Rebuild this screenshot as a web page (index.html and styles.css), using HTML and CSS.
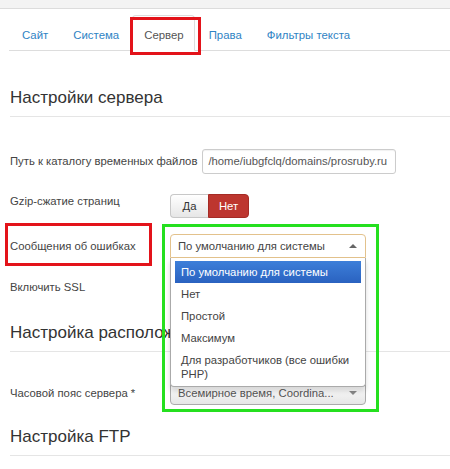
FILE: index.html
```html
<!DOCTYPE html>
<html lang="ru">
<head>
    <meta charset="UTF-8">
    <title>Настройки сервера</title>
    <link rel="stylesheet" href="styles.css">
</head>
<body>
    <div class="topbar"></div>
    <ul class="tabs">
        <li><a href="#">Сайт</a></li>
        <li><a href="#">Система</a></li>
        <li class="active"><a href="#">Сервер</a></li>
        <li><a href="#">Права</a></li>
        <li><a href="#">Фильтры текста</a></li>
    </ul>
    <div class="mark mark-tab"></div>

    <div class="page">
        <div class="legend legend-first">Настройки сервера</div>

        <div class="row row-path">
            <label class="lbl">Путь к каталогу временных файлов</label>
            <input class="text-input" type="text" value="/home/iubgfclq/domains/prosruby.ru">
        </div>

        <div class="row row-gzip">
            <label class="lbl lbl-top">Gzip-сжатие страниц</label>
            <div class="btn-group">
                <span class="btn">Да</span>
                <span class="btn btn-no">Нет</span>
            </div>
        </div>

        <div class="row row-errors">
            <label class="lbl">Сообщения об ошибках</label>
            <div class="chosen chosen-open">
                <span class="chosen-text">По умолчанию для системы</span>
                <span class="arrow-up"></span>
                <ul class="chosen-drop">
                    <li class="hl">По умолчанию для системы</li>
                    <li>Нет</li>
                    <li>Простой</li>
                    <li>Максимум</li>
                    <li>Для разработчиков (все ошибки PHP)</li>
                </ul>
            </div>
        </div>

        <div class="row row-ssl">
            <label class="lbl">Включить SSL</label>
        </div>

        <div class="legend legend-second">Настройка расположения</div>

        <div class="row row-tz">
            <label class="lbl">Часовой пояс сервера *</label>
            <div class="chosen chosen-tz">
                <span class="chosen-text">Всемирное время, Coordina...</span>
                <span class="arrow-down"></span>
            </div>
        </div>

        <div class="legend legend-third">Настройка FTP</div>
    </div>

    <div class="mark mark-label"></div>
    <div class="mark mark-green"></div>
</body>
</html>
```

FILE: styles.css
```css
body {
    margin: 0;
    background: #fff;
    font-family: "Liberation Sans", Arial, sans-serif;
    font-size: 11.3px;
    color: #444;
    position: relative;
    overflow: hidden;
}
.topbar {
    height: 8px;
    background: #f3f3f3;
    border-bottom: 1px solid #dcdcdc;
}
.tabs {
    list-style: none;
    margin: 6px 0 0 9px;
    padding: 0 0 0 1px;
    display: flex;
    border-bottom: 1px solid #ddd;
}
.tabs li {
    margin-right: 2px;
    margin-bottom: -1px;
}
.tabs a {
    display: block;
    padding: 10px 10px 6px 11px;
    line-height: 18px;
    font-size: 11.4px;
    color: #2f83c4;
    text-decoration: none;
    border: 1px solid transparent;
    border-radius: 4px 4px 0 0;
}
.tabs .active a {
    color: #555;
    background: #fff;
    border-color: #ddd #ddd transparent;
}
.page {
    padding: 0 0 0 10px;
}
.legend {
    font-size: 17px;
    line-height: 36px;
    border-bottom: 1px solid #e5e5e5;
    color: #333;
}
.legend-first {
    margin-top: 29px;
}
.legend-second {
    margin-top: 16px;
}
.legend-third {
    margin-top: 14px;
}
.row {
    display: flex;
    align-items: center;
}
.lbl {
    width: 160px;
    flex: none;
}
.row-path {
    margin-top: 31px;
    height: 26px;
}
.row-path .lbl {
    width: auto;
    margin-right: 5px;
}
.text-input {
    width: 194px;
    box-sizing: border-box;
    height: 25px;
    padding: 3px 5px;
    border: 1px solid #ccc;
    border-radius: 3px;
    font: 11.3px "Liberation Sans", Arial, sans-serif;
    color: #555;
    box-shadow: inset 0 1px 1px rgba(0, 0, 0, 0.06);
}
.row-gzip {
    margin-top: 20px;
    align-items: flex-start;
    height: 24px;
}
.lbl-top {
    line-height: 14px;
}
.btn-group {
    display: flex;
}
.btn {
    display: block;
    width: 38px;
    box-sizing: border-box;
    text-align: center;
    line-height: 22px;
    border: 1px solid #c8c8c8;
    border-right: none;
    border-radius: 4px 0 0 4px;
    background: linear-gradient(#fff, #e6e6e6);
    color: #333;
}
.btn-no {
    width: 41px;
    border: 1px solid #a52b25;
    border-radius: 0 4px 4px 0;
    background: #bd362f;
    color: #fff;
}
.row-errors {
    margin-top: 16px;
    height: 24px;
}
.chosen {
    position: relative;
    box-sizing: border-box;
    width: 196px;
    height: 24px;
    border: 1px solid #aaa;
    border-radius: 4px;
    background: linear-gradient(#fff 20%, #f0f0f0 60%, #e6e6e6);
    padding-left: 7px;
    line-height: 22px;
    color: #444;
}
.chosen-open {
    border-color: #e3c28c;
    border-radius: 4px 4px 0 0;
    background: #fff;
}
.arrow-up,
.arrow-down {
    position: absolute;
    right: 8px;
    top: 9px;
    width: 0;
    height: 0;
    border-left: 4px solid transparent;
    border-right: 4px solid transparent;
}
.arrow-up {
    border-bottom: 4px solid #666;
}
.arrow-down {
    border-top: 4px solid #888;
}
.chosen-drop {
    position: absolute;
    z-index: 5;
    left: -1px;
    top: 23px;
    width: 196px;
    box-sizing: border-box;
    margin: 0;
    padding: 3px 4px 1px;
    list-style: none;
    background: #fff;
    border: 1px solid #aaa;
    border-top: none;
    border-radius: 0 0 4px 4px;
    box-shadow: 0 4px 5px rgba(0, 0, 0, 0.15);
    color: #444;
}
.chosen-drop li {
    padding: 4px 6px;
    line-height: 14px;
}
.chosen-drop .hl {
    background: linear-gradient(#3d7fd9, #2a62c0);
    color: #fff;
}
.row-ssl {
    margin-top: 17px;
    height: 24px;
}
.row-tz {
    margin-top: 29px;
    height: 24px;
}
.chosen-tz {
    color: #555;
}
.mark {
    position: absolute;
    box-sizing: border-box;
    z-index: 10;
}
.mark-tab {
    left: 130px;
    top: 17px;
    width: 71px;
    height: 38px;
    border: 3px solid #e3131a;
}
.mark-label {
    left: 5px;
    top: 223px;
    width: 147px;
    height: 43px;
    border: 3px solid #e3131a;
}
.mark-green {
    left: 162px;
    top: 224px;
    width: 217px;
    height: 188px;
    border: 3px solid #25e01f;
}
```
